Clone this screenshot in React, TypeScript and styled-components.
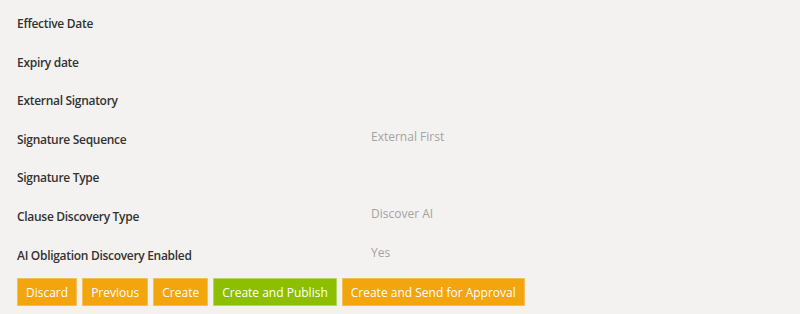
import styled, { createGlobalStyle } from "styled-components";

const GlobalStyle = createGlobalStyle`
  html, body {
    margin: 0;
    padding: 0;
    background: #f3f2f1;
  }
  body {
    font-family: "Open Sans", "Noto Sans", sans-serif;
  }
`;

type Field = { label: string; value?: string };

const FIELDS: Field[] = [
  { label: "Effective Date" },
  { label: "Expiry date" },
  { label: "External Signatory" },
  { label: "Signature Sequence", value: "External First" },
  { label: "Signature Type" },
  { label: "Clause Discovery Type", value: "Discover AI" },
  { label: "AI Obligation Discovery Enabled", value: "Yes" },
];

type Action = { text: string; variant: "orange" | "green" };

const ACTIONS: Action[] = [
  { text: "Discard", variant: "orange" },
  { text: "Previous", variant: "orange" },
  { text: "Create", variant: "orange" },
  { text: "Create and Publish", variant: "green" },
  { text: "Create and Send for Approval", variant: "orange" },
];

const App = () => {
  return (
    <Page>
      <GlobalStyle />
      <Details>
        {FIELDS.map((f) => (
          <Row key={f.label}>
            <Label>{f.label}</Label>
            <Value>{f.value}</Value>
          </Row>
        ))}
      </Details>
      <Toolbar>
        {ACTIONS.map((a) => (
          <Button key={a.text} $variant={a.variant}>
            {a.text}
          </Button>
        ))}
      </Toolbar>
    </Page>
  );
};

//*STYLES
const Page = styled.div`
  width: 800px;
  height: 314px;
  box-sizing: border-box;
  padding: 14px 17px 0 17px;
  background: #f3f2f1;
`;

const Details = styled.div`
  display: flex;
  flex-direction: column;
`;

const Row = styled.div`
  display: grid;
  grid-template-columns: 354px 1fr;
  height: 38.6px;
`;

const Label = styled.div`
  font-size: 12px;
  font-weight: 600;
  letter-spacing: -0.3px;
  color: #333333;
  line-height: 20px;
`;

const Value = styled.div`
  font-size: 12px;
  color: #a3a3a3;
  line-height: 20px;
  margin-top: -3px;
`;

const Toolbar = styled.div`
  display: flex;
  gap: 5px;
  margin-top: -6px;
`;

const Button = styled.button<{ $variant: "orange" | "green" }>`
  font-family: "Open Sans", "Noto Sans", sans-serif;
  font-size: 12px;
  color: #ffffff;
  height: 28px;
  padding: 0 8px;
  cursor: pointer;
  background: ${(p) => (p.$variant === "green" ? "#8dbf00" : "#f2a50c")};
  border: 1px solid ${(p) => (p.$variant === "green" ? "#b5d75a" : "#f6bf55")};
`;

export default App;
